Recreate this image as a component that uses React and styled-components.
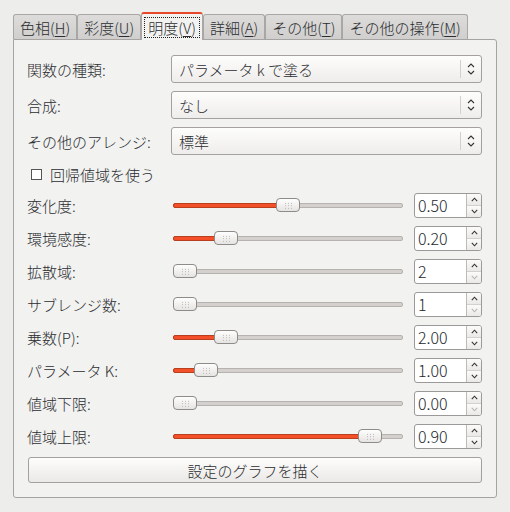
import styled, { createGlobalStyle } from "styled-components";

const Global = createGlobalStyle`
  body {
    margin: 0;
    background: #ededeb;
    font-family: "Noto Sans CJK JP", "Noto Sans", sans-serif;
    font-weight: 300;
    color: #2b2d30;
  }
`;

const Root = styled.div`
  padding: 12px 13px 0 13px;
  width: 484px;
`;

const TabBar = styled.div`
  display: flex;
  align-items: flex-end;
  height: 28px;
  position: relative;
  z-index: 1;
`;

const Tab = styled.div`
  box-sizing: border-box;
  height: ${(p) => (p.$active ? 28 : 25)}px;
  margin-bottom: ${(p) => (p.$active ? 0 : 1)}px;
  padding: 0 ${(p) => (p.$active ? 2 : 6)}px;
  display: flex;
  align-items: ${(p) => (p.$active ? "flex-start" : "center")};
  border: 1px solid #a9a7a5;
  border-top: ${(p) => (p.$active ? "2px solid #e5482a" : "1px solid #a9a7a5")};
  border-bottom: none;
  border-radius: 3px 3px 0 0;
  background: ${(p) =>
    p.$active ? "#f2f2f0" : "linear-gradient(#dddcda, #d0cfcd)"};
  font-size: 15px;
  line-height: 1;
  white-space: nowrap;
`;

const FocusRing = styled.span`
  margin-top: 3px;
  height: 21px;
  box-sizing: border-box;
  padding: 0 3px;
  border: 1px dotted #222;
  display: flex;
  align-items: center;
`;

const Key = styled.span`
  text-decoration: underline;
  text-underline-offset: 2px;
`;

const Panel = styled.div`
  margin-top: -1px;
  border: 1px solid #a6a4a2;
  border-radius: 0 3px 3px 3px;
  background: #f2f2f0;
  padding: 15px 14px 14px 13px;
  display: flex;
  flex-direction: column;
  gap: 8px;
`;

const ComboRow = styled.div`
  display: grid;
  grid-template-columns: 144px 1fr;
  align-items: center;
  height: 28px;
`;

const Label = styled.span`
  font-size: 15px;
  white-space: nowrap;
`;

const Combo = styled.div`
  height: 28px;
  box-sizing: border-box;
  border: 1px solid #a3a09e;
  border-radius: 3px;
  background: linear-gradient(#fdfdfc, #efedeb);
  display: flex;
  align-items: center;
  padding-left: 7px;
  font-size: 15px;
`;

const ComboText = styled.span`
  flex: 1;
`;

const ComboArrow = styled.span`
  width: 20px;
  height: 18px;
  border-left: 1px solid #d2d0ce;
  display: flex;
  align-items: center;
  justify-content: center;
`;

const CheckRow = styled.label`
  height: 22px;
  display: flex;
  align-items: center;
  padding-left: 4px;
  font-size: 15px;
`;

const CheckBox = styled.span`
  width: 11px;
  height: 11px;
  box-sizing: border-box;
  border: 1px solid #555;
  background: #fff;
  margin-right: 8px;
`;

const SliderRow = styled.div`
  display: grid;
  grid-template-columns: 146px 1fr 68px;
  align-items: center;
  height: 25px;
`;

const Track = styled.div`
  position: relative;
  width: 230px;
  height: 5px;
  box-sizing: border-box;
  border: 1px solid #b6b2b0;
  border-radius: 2px;
  background: #d4d0ce;
`;

const Fill = styled.div`
  position: absolute;
  left: -1px;
  top: -1px;
  height: 5px;
  box-sizing: border-box;
  border: 1px solid #b8401f;
  border-radius: 2px;
  background: #f3502a;
`;

const Handle = styled.div`
  position: absolute;
  top: -6px;
  width: 24px;
  height: 14px;
  box-sizing: border-box;
  border: 1px solid #8e8b89;
  border-radius: 4px;
  background: linear-gradient(#fefefe, #e6e4e2);
  display: flex;
  align-items: center;
  justify-content: center;

  &::after {
    content: "";
    width: 8px;
    height: 7px;
    background-image: radial-gradient(circle, #b0aeac 0.6px, transparent 0.8px);
    background-size: 3px 2.5px;
  }
`;

const Spin = styled.div`
  width: 68px;
  height: 25px;
  box-sizing: border-box;
  border: 1px solid #9c9a98;
  border-radius: 3px;
  background: #fff;
  display: flex;
  overflow: hidden;
`;

const SpinValue = styled.span`
  flex: 1;
  padding-left: 3px;
  font-size: 16px;
  line-height: 23px;
  color: #25282c;
`;

const SpinButtons = styled.div`
  width: 14px;
  border-left: 1px solid #bdbbb9;
  display: flex;
  flex-direction: column;
`;

const SpinButton = styled.span`
  flex: 1;
  display: flex;
  align-items: center;
  justify-content: center;
  background: linear-gradient(#fbfbfa, #ebe9e7);
  & + & {
    border-top: 1px solid #d3d1cf;
  }
`;

const Button = styled.button`
  height: 26px;
  margin-left: 1px;
  border: 1px solid #a3a09e;
  border-radius: 3px;
  background: linear-gradient(#fdfdfc, #ebe9e7);
  font-family: inherit;
  font-weight: inherit;
  font-size: 15px;
  color: inherit;
  padding: 0;
`;

const Chevron = ({ up, color = "#333" }) => (
  <svg width="7" height="5" viewBox="0 0 7 5">
    <path
      d={up ? "M0.8 4.2 L3.5 1.2 L6.2 4.2" : "M0.8 0.8 L3.5 3.8 L6.2 0.8"}
      fill="none"
      stroke={color}
      strokeWidth="1.1"
    />
  </svg>
);

const UpDown = () => (
  <svg width="8" height="14" viewBox="0 0 8 14">
    <path d="M1 5 L4 2 L7 5 M1 9 L4 12 L7 9" fill="none" stroke="#333" strokeWidth="1.1" />
  </svg>
);

const combos = [
  { label: "関数の種類:", value: "パラメータ k で塗る" },
  { label: "合成:", value: "なし" },
  { label: "その他のアレンジ:", value: "標準" },
];

const sliders = [
  { label: "変化度:", value: "0.50", pos: 0.5, min: false },
  { label: "環境感度:", value: "0.20", pos: 0.2, min: false },
  { label: "拡散域:", value: "2", pos: 0, min: true },
  { label: "サブレンジ数:", value: "1", pos: 0, min: true },
  { label: "乗数(P):", value: "2.00", pos: 0.2, min: false },
  { label: "パラメータ K:", value: "1.00", pos: 0.1, min: false },
  { label: "値域下限:", value: "0.00", pos: 0, min: true },
  { label: "値域上限:", value: "0.90", pos: 0.9, min: false },
];

const tabs = [
  ["色相(", "H", ")"],
  ["彩度(", "U", ")"],
  ["明度(", "V", ")"],
  ["詳細(", "A", ")"],
  ["その他(", "T", ")"],
  ["その他の操作(", "M", ")"],
];

export default function App() {
  return (
    <Root>
      <Global />
      <TabBar>
        {tabs.map(([a, k, b], i) => {
          const text = (
            <>
              {a}
              <Key>{k}</Key>
              {b}
            </>
          );
          return (
            <Tab key={k} $active={i === 2}>
              {i === 2 ? <FocusRing>{text}</FocusRing> : text}
            </Tab>
          );
        })}
      </TabBar>
      <Panel>
        {combos.map((c) => (
          <ComboRow key={c.label}>
            <Label>{c.label}</Label>
            <Combo>
              <ComboText>{c.value}</ComboText>
              <ComboArrow>
                <UpDown />
              </ComboArrow>
            </Combo>
          </ComboRow>
        ))}
        <CheckRow>
          <CheckBox />
          回帰値域を使う
        </CheckRow>
        {sliders.map((s) => {
          const left = Math.round(s.pos * 206);
          return (
            <SliderRow key={s.label}>
              <Label>{s.label}</Label>
              <Track>
                {s.pos > 0 && <Fill style={{ width: left + 12 }} />}
                <Handle style={{ left: left - 1 }} />
              </Track>
              <Spin>
                <SpinValue>{s.value}</SpinValue>
                <SpinButtons>
                  <SpinButton>
                    <Chevron up />
                  </SpinButton>
                  <SpinButton>
                    <Chevron color={s.min ? "#b8b6b4" : "#333"} />
                  </SpinButton>
                </SpinButtons>
              </Spin>
            </SliderRow>
          );
        })}
        <Button>設定のグラフを描く</Button>
      </Panel>
    </Root>
  );
}
